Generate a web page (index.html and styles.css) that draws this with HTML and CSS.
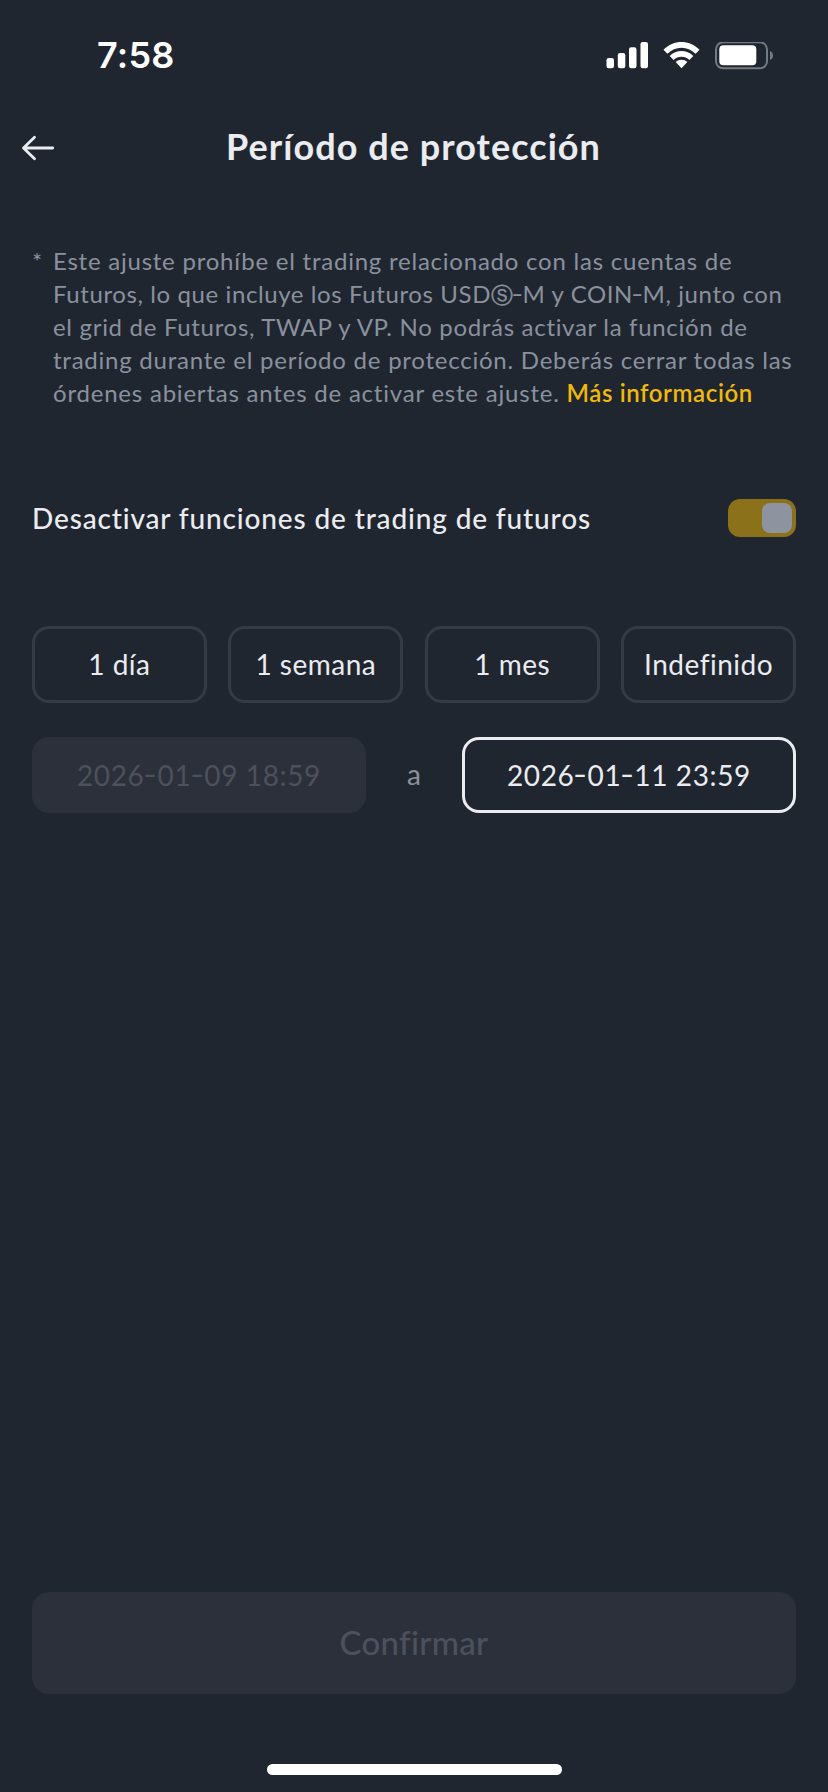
FILE: index.html
```html
<!DOCTYPE html>
<html lang="es">
<head>
<meta charset="utf-8">
<title>Período de protección</title>
<link rel="stylesheet" href="styles.css">
</head>
<body>
<div class="screen">
  <div class="status">
    <span class="time">7:58</span>
    <svg class="status-icons" width="168" height="28" viewBox="0 0 168 28" fill="#fff">
      <rect x="0.5" y="16" width="7.5" height="10.3" rx="2.2"/>
      <rect x="11.8" y="11" width="7.5" height="15.3" rx="2.2"/>
      <rect x="23" y="5.3" width="7.5" height="21" rx="2.2"/>
      <rect x="34.5" y="0" width="7.5" height="26.3" rx="2.2"/>
      <path d="M57.500 7.800C67.500-2.600 83.500-2.600 93.500 7.800L89.600 11.700C81.700 3.700 69.300 3.700 61.400 11.700Z"/>
      <path d="M63.700 14C70.200 7.400 80.800 7.400 87.300 14L83.400 17.900C79 13.700 72 13.700 67.600 17.900Z"/>
      <path d="M69.700 20.100C73 17.100 78 17.100 81.300 20.100L75.500 26.300Z"/>
      <rect x="110" y="0.300" width="51" height="26" rx="7" fill="none" stroke="#747a84" stroke-width="2"/>
      <rect x="113.300" y="3.300" width="37" height="20" rx="4"/>
      <path d="M164 9C168 10.500 168 16.500 164 18Z" fill="#747a84"/>
    </svg>
  </div>
  <header class="nav">
    <svg class="back" width="34" height="28" viewBox="0 0 34 28" fill="none" stroke="#eaecef" stroke-width="2.800" stroke-linecap="round" stroke-linejoin="round"><path d="M31.700 14H3M13.500 3.200L2.500 14L13.500 24.800"/></svg>
    <h1 class="title">Período de protección</h1>
  </header>
  <main class="content">
    <div class="note">
      <span class="star">*</span>
      <p class="note-text">
        <span class="line l1">Este ajuste prohíbe el trading relacionado con las cuentas de</span>
        <span class="line l2">Futuros, lo que incluye los Futuros USD<span class="circled">Ⓢ</span><span class="dash">-</span>M y COIN<span class="dash">-</span>M, junto con</span>
        <span class="line l3">el grid de Futuros, TWAP y VP. No podrás activar la función de</span>
        <span class="line l4">trading durante el período de protección. Deberás cerrar todas las</span>
        <span class="line l5">órdenes abiertas antes de activar este ajuste. <a class="more">Más información</a></span>
      </p>
    </div>
    <div class="setting">
      <span class="label">Desactivar funciones de trading de futuros</span>
      <span class="toggle"><span class="knob"></span></span>
    </div>
    <div class="periods">
      <div class="period">1 día</div>
      <div class="period">1 semana</div>
      <div class="period">1 mes</div>
      <div class="period">Indefinido</div>
    </div>
    <div class="range">
      <div class="date date-off">2026<span class="dash">-</span>01<span class="dash">-</span>09 18:59</div>
      <span class="to">a</span>
      <div class="date date-on">2026<span class="dash">-</span>01<span class="dash">-</span>11 23:59</div>
    </div>
  </main>
  <div class="confirm">Confirmar</div>
  <div class="home"></div>
</div>
</body>
</html>
```
FILE: styles.css
```css
* { box-sizing: border-box; }
body { margin: 0; background: #202630; }
.screen {
  width: 828px;
  height: 1792px;
  display: flex;
  flex-direction: column;
  background: #202630;
  color: #eaecef;
  font-family: Lato, "Open Sans", sans-serif;
  font-variant-ligatures: none;
  white-space: nowrap;
}
.status {
  height: 110px;
  padding: 32px 54px 0 97px;
  display: flex;
  justify-content: space-between;
  align-items: flex-start;
}
.time { font: 600 36px/46px Inter, sans-serif; letter-spacing: 0.2px; color: #fff; }
.status-icons { margin-top: 10px; }
.nav {
  height: 76px;
  padding: 0 22px 0 21px;
  display: grid;
  grid-template-columns: 34px 1fr 34px;
  align-items: center;
}
.title {
  margin: 0;
  padding-bottom: 4px;
  text-align: center;
  font-size: 36px;
  line-height: 48px;
  font-weight: 700;
  letter-spacing: 1.050px;
}
.content { padding: 58px 32px 0; }
.note {
  display: flex;
  height: 166px;
  color: #8a919e;
  font-size: 24px;
  line-height: 33px;
}
.star { width: 21px; }
.note-text { margin: 0; }
.line { display: block; height: 33px; }
.l1 { letter-spacing: 0.770px; }
.l2 { letter-spacing: 0.600px; }
.l3 { letter-spacing: 0.690px; }
.l4 { letter-spacing: 0.760px; }
.l5 { letter-spacing: 0.790px; }
.dash { display: inline-block; padding: 0 1px; transform: translateY(-1px) scaleX(1.35); }
.l2 .dash { padding: 0; }
.circled { font-family: "DejaVu Sans", sans-serif; font-size: 22px; line-height: 1; letter-spacing: 0; -webkit-text-stroke: 0.4px currentColor; }
.more { color: #f0b90b; font-weight: 600; letter-spacing: 0.600px; }
.setting {
  height: 38px;
  margin-top: 89px;
  display: flex;
  justify-content: space-between;
  align-items: center;
}
.label { font-size: 28px; line-height: 38px; font-weight: 500; letter-spacing: 0.860px; }
.toggle {
  width: 68px;
  height: 38px;
  padding: 4px;
  border-radius: 12px;
  background: #8a711a;
  display: flex;
  justify-content: flex-end;
}
.knob { width: 30px; height: 30px; border-radius: 8px; background: #8e949f; }
.periods {
  margin-top: 89px;
  display: grid;
  grid-template-columns: repeat(4, 1fr);
  column-gap: 21.600px;
}
.period {
  height: 77px;
  border: 3px solid #333b47;
  border-radius: 17px;
  font-size: 28px;
  line-height: 71px;
  letter-spacing: 0.500px;
  text-align: center;
}
.range { margin-top: 34px; display: flex; align-items: center; }
.date {
  width: 334px;
  height: 76px;
  border-radius: 17px;
  font-size: 28px;
  line-height: 76px;
  letter-spacing: 0.630px;
  text-align: center;
}
.date-off { background: #2b303b; color: #4b515d; }
.date-on { border: 3px solid #eaecef; line-height: 70px; }
.to { flex: 1; text-align: center; font-size: 28px; line-height: 72px; padding-bottom: 2px; color: #8a919e; }
.confirm {
  margin: auto 32px 0;
  height: 102px;
  border-radius: 17px;
  background: #2b303b;
  color: #4b515d;
  font-size: 33px;
  line-height: 101px;
  font-weight: 500;
  letter-spacing: 0.300px;
  text-align: center;
}
.home { width: 295px; height: 11px; margin: 70px auto 17px; border-radius: 6px; background: #fff; }
```
